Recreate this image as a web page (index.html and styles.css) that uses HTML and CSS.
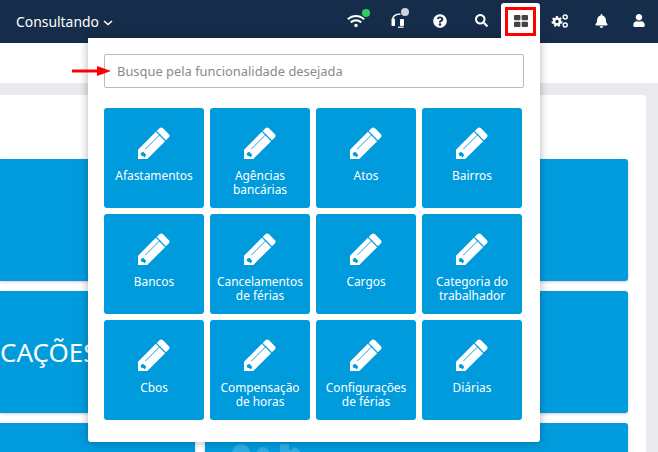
FILE: index.html
```html
<!DOCTYPE html>
<html lang="en">

<head>
    <meta charset="UTF-8" />
    <meta name="viewport" content="width=device-width, initial-scale=1.0" />
    <title>Consultando</title>
    <link rel="stylesheet" href="styles.css">
</head>

<body>

    <header>
        <div class="logo">
            Consultando
            <svg class="chevron" viewBox="0 0 10 6"><path d="M1 1l4 3.6L9 1" /></svg>
        </div>
        <div class="icons">
            <span class="status">
                <svg class="ico-wifi" viewBox="0 0 640 512"><path d="M634.91 154.88C457.74-8.99 182.19-8.93 5.09 154.88c-6.66 6.16-6.79 16.59-.35 22.98l34.24 33.97c6.14 6.1 16.02 6.23 22.4.38 145.92-133.68 371.3-133.71 517.25 0 6.38 5.85 16.26 5.71 22.4-.38l34.24-33.97c6.43-6.39 6.3-16.82-.36-22.98zM320 352c-35.35 0-64 28.65-64 64s28.65 64 64 64 64-28.65 64-64-28.65-64-64-64zm202.67-83.59c-115.26-101.93-290.21-101.82-405.34 0-6.9 6.1-7.12 16.69-.57 23.15l34.44 33.99c6 5.92 15.66 6.32 22.05.8 83.95-72.57 209.74-72.41 293.49 0 6.39 5.52 16.05 5.13 22.05-.8l34.44-33.99c6.56-6.46 6.33-17.06-.56-23.15z" /></svg>
                <i class="dot dot-green"></i>
            </span>
            <span class="status">
                <svg class="ico-headset" viewBox="0 0 14 15"><path class="line" d="M1.6 7C1.4 3.4 4.4 1 9.5 1" /><rect x="0.5" y="5.5" width="3.5" height="7.5" rx="1" /><rect x="9" y="6" width="4" height="7" rx="1" /><path d="M7 13.6h5.6v1.2H7z" /></svg>
                <i class="dot dot-grey"></i>
            </span>
            <svg class="ico-help" viewBox="0 0 512 512"><path d="M504 256c0 136.997-111.043 248-248 248S8 392.997 8 256C8 119.083 119.043 8 256 8s248 111.083 248 248zM262.655 90c-54.497 0-89.255 22.957-116.549 63.758-3.536 5.286-2.353 12.415 2.715 16.258l34.699 26.31c5.205 3.947 12.621 3.008 16.665-2.122 17.864-22.658 30.113-35.797 57.303-35.797 20.429 0 45.698 13.148 45.698 32.958 0 14.976-12.363 22.667-32.534 33.976C247.128 238.528 216 254.941 216 296v4c0 6.627 5.373 12 12 12h56c6.627 0 12-5.373 12-12v-1.333c0-28.462 83.186-29.647 83.186-106.667 0-58.002-60.165-102-116.531-102zM256 338c-25.365 0-46 20.635-46 46 0 25.364 20.635 46 46 46s46-20.636 46-46c0-25.365-20.635-46-46-46z" /></svg>
            <svg class="ico-search" viewBox="0 0 512 512"><path d="M505 442.7L405.3 343c-4.5-4.5-10.6-7-17-7H372c27.6-35.3 44-79.7 44-128C416 93.1 322.9 0 208 0S0 93.1 0 208s93.1 208 208 208c48.3 0 92.7-16.4 128-44v16.3c0 6.4 2.5 12.5 7 17l99.7 99.7c9.4 9.4 24.6 9.4 33.9 0l28.3-28.3c9.4-9.4 9.4-24.6.1-34zM208 336c-70.7 0-128-57.2-128-128 0-70.7 57.2-128 128-128 70.7 0 128 57.2 128 128 0 70.7-57.2 128-128 128z" /></svg>
            <span class="grid-slot"></span>
            <svg class="ico-cogs" viewBox="0 0 18 14">
                <circle class="ring" cx="6" cy="7.5" r="3" />
                <circle class="teeth" cx="6" cy="7.5" r="4.6" />
                <circle class="ring-thin" cx="14.2" cy="3" r="2" />
                <circle class="ring-thin" cx="14.2" cy="11" r="2" />
            </svg>
            <svg class="ico-bell" viewBox="0 0 448 512"><path d="M224 512c35.32 0 63.97-28.65 63.97-64H160.03c0 35.35 28.65 64 63.97 64zm215.39-149.71c-19.32-20.76-55.47-51.99-55.47-154.29 0-77.7-54.48-139.9-127.94-155.16V32c0-17.67-14.32-32-31.98-32s-31.98 14.33-31.98 32v20.84C118.56 68.1 64.08 130.3 64.08 208c0 102.3-36.15 133.53-55.47 154.29-6 6.45-8.66 14.16-8.61 21.71.11 16.4 12.98 32 32.1 32h383.8c19.12 0 32-15.6 32.1-32 .05-7.55-2.61-15.27-8.61-21.71z" /></svg>
            <svg class="ico-user" viewBox="0 0 448 512"><path d="M224 256c70.7 0 128-57.3 128-128S294.7 0 224 0 96 57.3 96 128s57.3 128 128 128zm89.6 32h-16.7c-22.2 10.2-46.9 16-72.9 16s-50.6-5.8-72.9-16h-16.7C60.2 288 0 348.2 0 422.4V464c0 26.5 21.5 48 48 48h352c26.5 0 48-21.5 48-48v-41.6c0-74.2-60.2-134.4-134.4-134.4z" /></svg>
        </div>
    </header>

    <div class="subbar"></div>

    <main>
        <div class="panel">
            <div class="cards">
                <div class="card"></div>
                <div class="card"></div>
                <div class="card card-title">CAÇÕES</div>
                <div class="card"></div>
                <div class="card"></div>
                <div class="card">
                    <svg class="watermark" viewBox="0 0 70 40"><circle cx="9" cy="10" r="9" /><circle cx="31" cy="10" r="6" /><path d="M48 1h9v30h-9zM57 8l6-4 5 4v20H57z" /></svg>
                </div>
            </div>
        </div>
    </main>

    <!-- dropdown do menu de funcionalidades -->
    <div class="dropdown">
        <div class="tab">
            <svg class="ico-grid" viewBox="0 0 14 12"><rect width="6.4" height="5.3" rx="1" /><rect x="7.6" width="6.4" height="5.3" rx="1" /><rect y="6.7" width="6.4" height="5.3" rx="1" /><rect x="7.6" y="6.7" width="6.4" height="5.3" rx="1" /></svg>
        </div>
        <svg class="arrow" viewBox="0 0 39 10"><path d="M0 3.5h25V0l14 5-14 5V6.5H0z" /></svg>
        <input class="search" type="text" placeholder="Busque pela funcionalidade desejada" />
        <div class="tiles">
            <a class="tile"><svg viewBox="0 0 32 32"><use href="#pencil" /></svg><span>Afastamentos</span></a>
            <a class="tile"><svg viewBox="0 0 32 32"><use href="#pencil" /></svg><span>Agências bancárias</span></a>
            <a class="tile"><svg viewBox="0 0 32 32"><use href="#pencil" /></svg><span>Atos</span></a>
            <a class="tile"><svg viewBox="0 0 32 32"><use href="#pencil" /></svg><span>Bairros</span></a>
            <a class="tile"><svg viewBox="0 0 32 32"><use href="#pencil" /></svg><span>Bancos</span></a>
            <a class="tile"><svg viewBox="0 0 32 32"><use href="#pencil" /></svg><span>Cancelamentos de férias</span></a>
            <a class="tile"><svg viewBox="0 0 32 32"><use href="#pencil" /></svg><span>Cargos</span></a>
            <a class="tile"><svg viewBox="0 0 32 32"><use href="#pencil" /></svg><span>Categoria do trabalhador</span></a>
            <a class="tile"><svg viewBox="0 0 32 32"><use href="#pencil" /></svg><span>Cbos</span></a>
            <a class="tile"><svg viewBox="0 0 32 32"><use href="#pencil" /></svg><span>Compensação de horas</span></a>
            <a class="tile"><svg viewBox="0 0 32 32"><use href="#pencil" /></svg><span>Configurações de férias</span></a>
            <a class="tile"><svg viewBox="0 0 32 32"><use href="#pencil" /></svg><span>Diárias</span></a>
        </div>
    </div>

    <svg class="defs" width="0" height="0">
        <defs>
            <g id="pencil">
                <path d="M18.1 3.9L21 1q1.5-1.2 3 0l6 6q1.2 1.5 0 3l-2.9 2.9z" />
                <path d="M17.3 4.7l9 9L9 31H0v-9z" />
                <path class="pencil-line" d="M7 21.5L21.5 7" />
                <path class="pencil-tip" d="M2.5 25.5l2.5-1.5 3 3-1.5 2.5-1.5-1.5-1.5.2z" />
            </g>
        </defs>
    </svg>

</body>

</html>
```

FILE: styles.css
```css
* {
    box-sizing: border-box;
    font-family: "Noto Sans", "Open Sans", sans-serif;
}

body {
    margin: 0;
    height: 100vh;
    overflow: hidden;
    display: flex;
    flex-direction: column;
    background-color: white;
}

header {
    height: 43px;
    flex-shrink: 0;
    background-color: #152c4a;
    color: white;
    padding: 0 13px 0 16px;
    display: flex;
    justify-content: space-between;
    align-items: center;
}

.logo {
    font-size: 13.9px;
    display: flex;
    align-items: center;
    gap: 4px;
}

.chevron {
    width: 10px;
    height: 6px;
    margin-top: 2px;
    fill: none;
    stroke: white;
    stroke-width: 1.5;
}

.icons {
    display: flex;
    align-items: center;
    gap: 26px;
    fill: white;
    margin-top: -2px;
}

.status {
    position: relative;
    display: flex;
}

.dot {
    position: absolute;
    top: -5px;
    right: -5px;
    width: 8px;
    height: 8px;
    border-radius: 50%;
}

.dot-green {
    background-color: #2fd05a;
}

.dot-grey {
    right: -4px;
    background-color: #cfd2d6;
}

.ico-wifi {
    width: 18px;
    height: 14px;
}

.ico-headset {
    width: 14px;
    height: 15px;
}

.ico-headset .line {
    fill: none;
    stroke: white;
    stroke-width: 1.5;
}

.ico-help {
    width: 14px;
    height: 14px;
    margin-left: 2px;
}

.ico-search {
    width: 13px;
    height: 13px;
    margin-left: 2px;
}

.grid-slot {
    width: 11px;
}

.ico-cogs {
    width: 18px;
    height: 14px;
    fill: none;
    stroke: white;
}

.ico-cogs .ring {
    stroke-width: 2.6;
}

.ico-cogs .teeth {
    stroke-width: 1.8;
    stroke-dasharray: 2 2;
}

.ico-cogs .ring-thin {
    stroke-width: 1.5;
}

.ico-bell {
    width: 13px;
    height: 14px;
}

.ico-user {
    width: 12px;
    height: 13px;
    margin-left: -1px;
}

.subbar {
    height: 40px;
    flex-shrink: 0;
}

main {
    flex: 1;
    background-color: #e9eaee;
    padding: 12px 12px 0 0;
    overflow: hidden;
}

.panel {
    height: 100%;
    background-color: white;
    border-radius: 0 3px 0 0;
    padding: 64px 18px 0 0;
}

.cards {
    display: grid;
    grid-template-columns: 195px 423px;
    grid-auto-rows: 122px;
    gap: 10px;
}

.card {
    background-color: #009bdd;
    border-radius: 0 3px 3px 0;
    box-shadow: 0 1px 3px rgba(0, 0, 0, 0.2);
    overflow: hidden;
}

.card:nth-child(even) {
    border-radius: 3px;
}

.card-title {
    color: white;
    font-size: 26px;
    line-height: 122px;
    white-space: nowrap;
}

.watermark {
    display: block;
    width: 70px;
    height: 40px;
    margin: 20px 0 0 27px;
    fill: rgba(255, 255, 255, 0.18);
}

.dropdown {
    position: absolute;
    top: 38px;
    left: 88px;
    width: 452px;
    height: 404px;
    padding: 16px 16px 0;
    background-color: white;
    border-radius: 0 0 3px 3px;
    box-shadow: 0 0 10px rgba(0, 0, 0, 0.3);
}

.tab {
    position: absolute;
    top: -35px;
    right: 0;
    width: 39px;
    height: 36px;
    padding: 4px 0 0 4px;
    background-color: white;
    border-radius: 3px 3px 0 0;
}

.tab .ico-grid {
    display: block;
    box-sizing: content-box;
    width: 14px;
    height: 12px;
    padding: 5px 5px 6px 6px;
    border: 3px solid #f00;
    fill: #444;
}

.arrow {
    position: absolute;
    top: 28px;
    left: -16px;
    width: 39px;
    height: 10px;
    fill: #f00;
}

.search {
    display: block;
    width: 420px;
    height: 34px;
    padding: 0 12px;
    font-size: 12.9px;
    color: #555;
    border: 1px solid #bbb;
    border-radius: 2px;
    outline: none;
}

.search::placeholder {
    color: #8a8a8a;
    opacity: 1;
}

.tiles {
    display: grid;
    grid-template-columns: repeat(4, 100px);
    grid-auto-rows: 100px;
    gap: 6px;
    margin-top: 20px;
}

.tile {
    background-color: #009bdd;
    color: white;
    border-radius: 3px;
    padding: 19px 4px 0;
    display: flex;
    flex-direction: column;
    align-items: center;
    text-align: center;
    font-size: 11.9px;
    line-height: 14px;
}

.tile svg {
    width: 33px;
    height: 33px;
    fill: white;
    margin-bottom: 8px;
    flex-shrink: 0;
}

.pencil-line {
    fill: none;
    stroke: #009bdd;
    stroke-width: 0.9;
}

.pencil-tip {
    fill: #009bdd;
}

.defs {
    position: absolute;
}
```
